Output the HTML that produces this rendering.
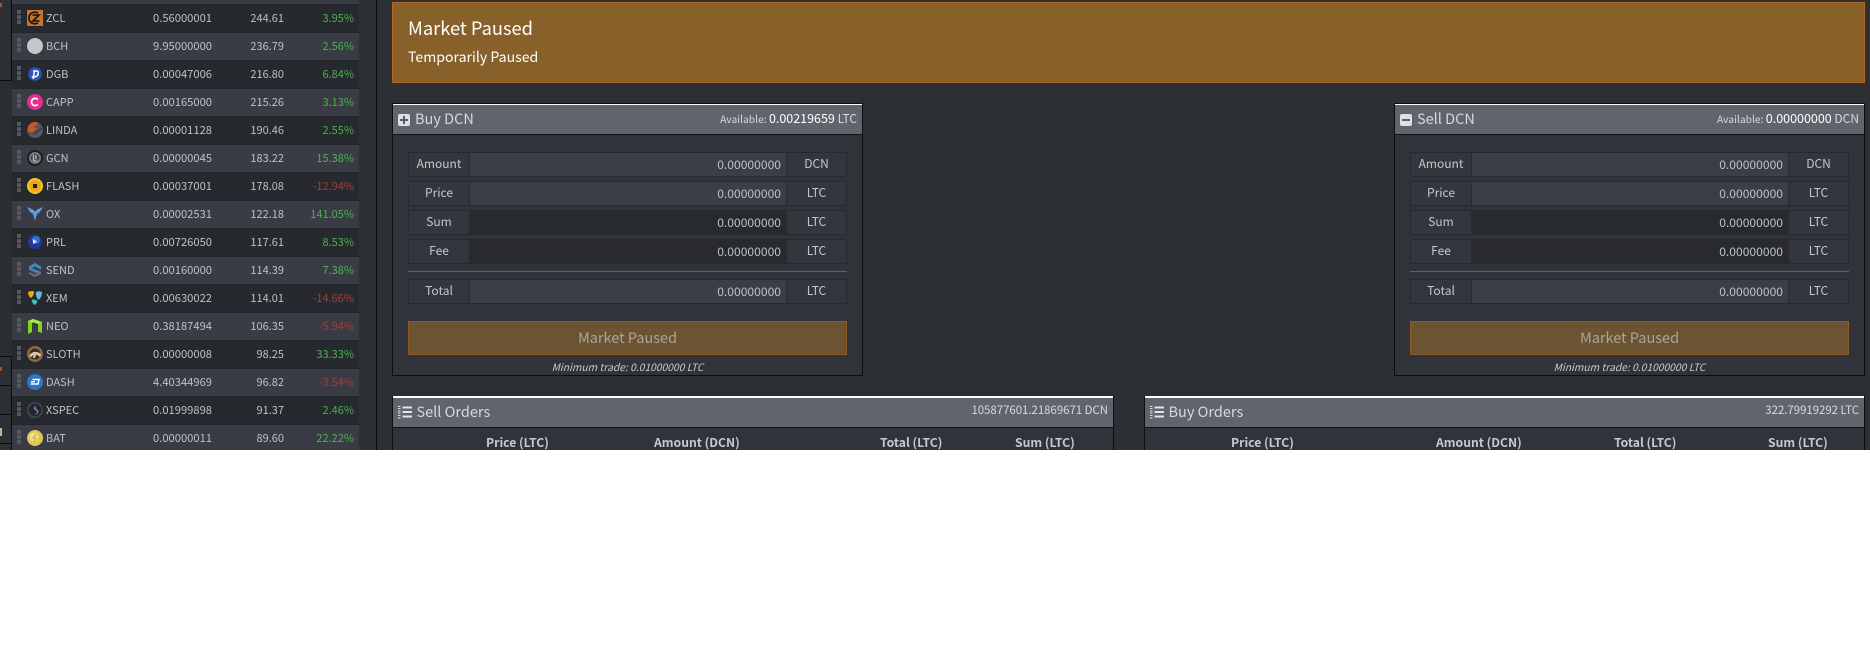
<!DOCTYPE html>
<html><head><meta charset="utf-8"><title>Market</title>
<style>
*{box-sizing:border-box;margin:0;padding:0}
html,body{width:1870px;height:648px;background:#fff;overflow:hidden}
body{font-family:"Noto Sans CJK JP","Liberation Sans",sans-serif;font-size:11px;color:#bcc2c9}
#app{position:absolute;left:0;top:0;width:1870px;height:450px;background:#2c2f34;overflow:hidden}
#app div,#app span,#app svg{position:absolute;white-space:nowrap}
.side{left:0;width:12px;background:#2c2f34;border-right:1px solid #0c0d0f}
.vl{left:376px;top:0;width:1px;height:450px;background:#0c0d0f}
.r{left:12px;width:347px;height:28px;background:#26292d;border-top:1px solid #212429;line-height:27px}
.r.a{background:#393c44}
.r .h{left:5px;width:4px;height:4px;background:#55585e}
.r .h1{top:5px}.r .h2{top:10px}.r .h3{top:15px}
.r svg{left:15px;top:5px;width:16px;height:16px}
.r .s{left:34px}
.r .p{left:141px;font-size:11.2px}
.r .v{right:75px}
.r .c{right:5px;color:#4cb34f}
.r .c.n{color:#a83c3c}
#ban{left:392px;top:2px;width:1473px;height:81px;background:#886029;border:1px solid #b5651d;color:#fff}
#ban .t{left:15px;top:12px;font-size:18.3px;line-height:26px}
#ban .u{left:15px;top:43px;font-size:14.1px;line-height:22px}
.pn{top:103px;width:471px;height:273px;background:#30333a;border:1px solid #0d0e10}
.hd{left:0;top:0;width:469px;height:31px;background:#61646c;border-top:1px solid #fff;border-bottom:1px solid #131416}
.ttl{left:22px;top:0;font-size:14.5px;line-height:28px;color:#d5d8dc}
.av{right:5px;top:0;font-size:12px;line-height:26px;color:#d8dade}
.av i{font-style:normal;font-size:10.3px}
.av b{font-weight:400;color:#fff;font-size:12.5px}
.ic{left:5px;top:9px;width:12px;height:12px;background:#dfe0e3;border-radius:2px}
.ic i{position:absolute;background:#5a5d65}
.f{left:15px;width:439px;height:25px;background:#33363c;border:1px solid #26292d}
.f .l{left:0;top:0;width:60px;height:23px;text-align:center;line-height:22px;color:#c4c8cd;font-size:12px}
.f .i{left:60px;top:0;width:318px;height:23px;background:#3b3e46;border-left:1px solid #26292d;border-right:1px solid #26292d;text-align:right;padding-right:5px;line-height:24px;color:#bcc2c9;font-size:12.1px}
.f .i.d{background:#292a2d;border-color:#292a2d}
.f .e{left:378px;top:0;width:59px;height:23px;text-align:center;line-height:22px;color:#c4c8cd;font-size:12px}
.hr{left:15px;top:167px;width:439px;height:1px;background:#5e6166}
.btn{left:15px;top:217px;width:439px;height:34px;background:#6c5432;border:1px solid #8e5a26;text-align:center;line-height:32px;font-size:14.5px;color:#aaa49b}
.mn{left:0;top:254px;width:469px;text-align:center;font-size:10.3px;font-style:italic;line-height:18px;color:#c8ccd1}
.od{top:396px;height:70px;background:#30333a;border-left:1px solid #0d0e10;border-right:1px solid #0d0e10}
.od .hd{top:0;height:32px;border-top:2px solid #fff;left:0}
.od .ttl{top:0;line-height:28px;left:23.5px}
.od .rt{right:5px;top:0;line-height:25px;font-size:11.4px;color:#d8dade}
.th{top:37px;line-height:18px;font-weight:700;font-size:12.2px;color:#c6cad0}
.lst{left:5px;top:7px;width:14px;height:14px}
</style></head><body>
<div id="app">
<div class="side" style="top:-1px;height:82px;border-bottom:1px solid #0c0d0f"></div>
<div style="left:0;top:3px;width:2px;height:4px;background:#a0552a"></div>
<div style="left:0;top:81px;width:12px;height:275px;background:#2a2d31"></div>
<div class="side" style="top:356px;height:30px;border-top:1px solid #0c0d0f"></div>
<div class="side" style="top:385px;height:29px;border-top:1px solid #0c0d0f"></div>
<div class="side" style="top:414px;height:29px;border-top:1px solid #0c0d0f"></div>
<div class="side" style="top:443px;height:10px;border-top:1px solid #0c0d0f"></div>
<div style="left:0;top:367px;width:2px;height:4px;background:#a0552a"></div>
<div style="left:0;top:428px;width:2px;height:8px;background:#c8b090"></div>

<div class="r a" style="top:-24px;border:0"></div>

<div class="r" style="top:4px"><div class="h h1"></div><div class="h h2"></div><div class="h h3"></div>
<svg viewBox="0 0 16 16"><rect width="16" height="16" fill="#c8722e"/><path d="M11 3.200A5.800 5.800 0 1 0 11 12.800" fill="none" stroke="#16130f" stroke-width="1.600"/><path d="M5.500 5h6.500L6 11h6.500" fill="none" stroke="#16130f" stroke-width="1.600"/></svg>
<span class="s">ZCL</span><span class="p">0.56000001</span><span class="v">244.61</span><span class="c">3.95%</span></div>

<div class="r a" style="top:32px"><div class="h h1"></div><div class="h h2"></div><div class="h h3"></div>
<svg viewBox="0 0 16 16"><circle cx="8" cy="8" r="8" fill="#c6c6c6"/></svg>
<span class="s">BCH</span><span class="p">9.95000000</span><span class="v">236.79</span><span class="c">2.56%</span></div>

<div class="r" style="top:60px"><div class="h h1"></div><div class="h h2"></div><div class="h h3"></div>
<svg viewBox="0 0 16 16"><circle cx="8" cy="8" r="6.8" fill="#2a56bb"/><path d="M6 5h3.2c2 0 2.4 1.4 1.9 3-.5 1.7-2 3-4.1 3H4.8M7.4 5 6.2 13" fill="none" stroke="#fff" stroke-width="1.5"/></svg>
<span class="s">DGB</span><span class="p">0.00047006</span><span class="v">216.80</span><span class="c">6.84%</span></div>

<div class="r a" style="top:88px"><div class="h h1"></div><div class="h h2"></div><div class="h h3"></div>
<svg viewBox="0 0 16 16"><circle cx="8" cy="8" r="8" fill="#e0308c"/><path d="M10.8 5.6A3.6 3.6 0 1 0 10.8 10.4" fill="none" stroke="#fff" stroke-width="1.7"/></svg>
<span class="s">CAPP</span><span class="p">0.00165000</span><span class="v">215.26</span><span class="c">3.13%</span></div>

<div class="r" style="top:116px"><div class="h h1"></div><div class="h h2"></div><div class="h h3"></div>
<svg viewBox="0 0 16 16"><circle cx="8" cy="8" r="8" fill="#55585c"/><path d="M1 7C1 3 4 0 8 0c2 0 3 .6 3 1.5L6 5l4 1-5 4H2.500C1.500 9.500 1 8.500 1 7z" fill="#d9531e"/><path d="M7 12l8-6" stroke="#26292d" stroke-width="1"/></svg>
<span class="s">LINDA</span><span class="p">0.00001128</span><span class="v">190.46</span><span class="c">2.55%</span></div>

<div class="r a" style="top:144px"><div class="h h1"></div><div class="h h2"></div><div class="h h3"></div>
<svg viewBox="0 0 16 16"><circle cx="8" cy="8" r="8" fill="#1f1f20"/><circle cx="8" cy="8" r="5.200" fill="#444" stroke="#8c8c8c" stroke-width="1.400"/><path d="M6.500 4.500v6.500h4M9 5v4.500" fill="none" stroke="#bbb" stroke-width="1.300"/></svg>
<span class="s">GCN</span><span class="p">0.00000045</span><span class="v">183.22</span><span class="c">15.38%</span></div>

<div class="r" style="top:172px"><div class="h h1"></div><div class="h h2"></div><div class="h h3"></div>
<svg viewBox="0 0 16 16"><circle cx="8" cy="8" r="8" fill="#f4c61f"/><circle cx="8" cy="8" r="5.800" fill="#e8a81c"/><rect x="6" y="6" width="4" height="4" fill="#22201a"/></svg>
<span class="s">FLASH</span><span class="p">0.00037001</span><span class="v">178.08</span><span class="c n">-12.94%</span></div>

<div class="r a" style="top:200px"><div class="h h1"></div><div class="h h2"></div><div class="h h3"></div>
<svg viewBox="0 0 16 16"><path d="M0 1l6 3 2 2 2-2 6-3-3 5-3 2-2 7-2-7-3-2z" fill="#5b9bdc"/><path d="M0 1l6 3 2 2 2-2 6-3-6 3.500-2 1-2-1z" fill="#cfe0f2"/></svg>
<span class="s">OX</span><span class="p">0.00002531</span><span class="v">122.18</span><span class="c">141.05%</span></div>

<div class="r" style="top:228px"><div class="h h1"></div><div class="h h2"></div><div class="h h3"></div>
<svg viewBox="0 0 16 16"><circle cx="8" cy="8" r="7" fill="#27359a"/><circle cx="9" cy="6" r="4" fill="#2b74d2"/><path d="M6 5l4 2.500-4 2.500z" fill="#d5e6f8"/></svg>
<span class="s">PRL</span><span class="p">0.00726050</span><span class="v">117.61</span><span class="c">8.53%</span></div>

<div class="r a" style="top:256px"><div class="h h1"></div><div class="h h2"></div><div class="h h3"></div>
<svg viewBox="0 0 16 16"><path d="M8 1l6 3.500v3L8 4.500 2 7.500V4.500z" fill="#3f8ac9"/><path d="M2 5l12 5v2l-6 3-6-3v-2l6 2.500 2-1L2 8z" fill="#6a6d74"/><path d="M2 5l12 5-2 1L2 7z" fill="#3f8ac9"/></svg>
<span class="s">SEND</span><span class="p">0.00160000</span><span class="v">114.39</span><span class="c">7.38%</span></div>

<div class="r" style="top:284px"><div class="h h1"></div><div class="h h2"></div><div class="h h3"></div>
<svg viewBox="0 0 16 16"><path d="M1 2c2-1 5-1 6-.5C7 4 6 7 3.500 8 2 6.500 1 4 1 2z" fill="#f5a623"/><path d="M9 2c2-1 4-1 6 0 0 3-1 6-3.500 8C9.500 8 8.500 5 9 2z" fill="#60b8e6"/><path d="M4.500 10c2-1 4.500-.500 6 1.500-1 2-2 3-3 3.500-1.500-1-2.500-3-3-5z" fill="#43c6b6"/></svg>
<span class="s">XEM</span><span class="p">0.00630022</span><span class="v">114.01</span><span class="c n">-14.66%</span></div>

<div class="r a" style="top:312px"><div class="h h1"></div><div class="h h2"></div><div class="h h3"></div>
<svg viewBox="0 0 16 16"><path d="M1 3l5-2 9 3v11l-4-1.500V6L6 4.200 5 5v9l-4 2z" fill="#7fd321"/><path d="M1 3l5-2 9 3-4 2-5-1.800L5 5z" fill="#a8e84a"/></svg>
<span class="s">NEO</span><span class="p">0.38187494</span><span class="v">106.35</span><span class="c n">-5.94%</span></div>

<div class="r" style="top:340px"><div class="h h1"></div><div class="h h2"></div><div class="h h3"></div>
<svg viewBox="0 0 16 16"><circle cx="8" cy="8" r="8" fill="#8c6a3c"/><circle cx="8" cy="8" r="5.500" fill="#3a3026"/><path d="M2 10c2-4 7-6 12-2l-1 3c-2-2-3-2.500-4-2l-1 3H6l.5-3L4 11z" fill="#d8c9ab"/></svg>
<span class="s">SLOTH</span><span class="p">0.00000008</span><span class="v">98.25</span><span class="c">33.33%</span></div>

<div class="r a" style="top:368px"><div class="h h1"></div><div class="h h2"></div><div class="h h3"></div>
<svg viewBox="0 0 16 16"><circle cx="8" cy="8" r="8" fill="#2f74c6"/><path d="M5.500 5.500H12l-1 4.500H3.800M4 7.800h4" fill="none" stroke="#fff" stroke-width="1.500"/></svg>
<span class="s">DASH</span><span class="p">4.40344969</span><span class="v">96.82</span><span class="c n">-3.54%</span></div>

<div class="r" style="top:396px"><div class="h h1"></div><div class="h h2"></div><div class="h h3"></div>
<svg viewBox="0 0 16 16"><circle cx="8" cy="8" r="7.200" fill="#23272e" stroke="#4b5361" stroke-width="1.200"/><path d="M10.500 3C6 5 6 7 9 8.500c2 1 1.500 3-2 4.500C12 12 12.500 9.500 10 7.500 8 6 8 4.500 10.500 3z" fill="#6b93c4"/></svg>
<span class="s">XSPEC</span><span class="p">0.01999898</span><span class="v">91.37</span><span class="c">2.46%</span></div>

<div class="r a" style="top:424px"><div class="h h1"></div><div class="h h2"></div><div class="h h3"></div>
<svg viewBox="0 0 16 16"><circle cx="8" cy="8" r="8" fill="#e0c658"/><circle cx="7" cy="7" r="4.500" fill="#f3e08a"/><path d="M9 4l-3 4h3l-2 4" stroke="#c9a93a" stroke-width="1" fill="none"/></svg>
<span class="s">BAT</span><span class="p">0.00000011</span><span class="v">89.60</span><span class="c">22.22%</span></div>

<div class="vl"></div>

<div id="ban"><div class="t">Market Paused</div><div class="u">Temporarily Paused</div></div>

<!-- BUY -->
<div class="pn" style="left:392px">
 <div class="hd"><div class="ic"><i style="left:2px;top:5px;width:8px;height:2px"></i><i style="left:5px;top:2px;width:2px;height:8px"></i></div>
 <div class="ttl">Buy DCN</div><div class="av"><i>Available: </i><b>0.00219659</b> LTC</div></div>
 <div class="f" style="top:48px"><div class="l">Amount</div><div class="i">0.00000000</div><div class="e">DCN</div></div>
 <div class="f" style="top:77px"><div class="l">Price</div><div class="i">0.00000000</div><div class="e">LTC</div></div>
 <div class="f" style="top:106px"><div class="l">Sum</div><div class="i d">0.00000000</div><div class="e">LTC</div></div>
 <div class="f" style="top:135px"><div class="l">Fee</div><div class="i d">0.00000000</div><div class="e">LTC</div></div>
 <div class="hr"></div>
 <div class="f" style="top:175px"><div class="l">Total</div><div class="i">0.00000000</div><div class="e">LTC</div></div>
 <div class="btn">Market Paused</div>
 <div class="mn">Minimum trade: 0.01000000 LTC</div>
</div>

<!-- SELL -->
<div class="pn" style="left:1394px">
 <div class="hd"><div class="ic"><i style="left:2px;top:5px;width:8px;height:2px"></i></div>
 <div class="ttl">Sell DCN</div><div class="av"><i>Available: </i><b>0.00000000</b> DCN</div></div>
 <div class="f" style="top:48px"><div class="l">Amount</div><div class="i">0.00000000</div><div class="e">DCN</div></div>
 <div class="f" style="top:77px"><div class="l">Price</div><div class="i">0.00000000</div><div class="e">LTC</div></div>
 <div class="f" style="top:106px"><div class="l">Sum</div><div class="i d">0.00000000</div><div class="e">LTC</div></div>
 <div class="f" style="top:135px"><div class="l">Fee</div><div class="i d">0.00000000</div><div class="e">LTC</div></div>
 <div class="hr"></div>
 <div class="f" style="top:175px"><div class="l">Total</div><div class="i">0.00000000</div><div class="e">LTC</div></div>
 <div class="btn">Market Paused</div>
 <div class="mn">Minimum trade: 0.01000000 LTC</div>
</div>

<!-- SELL ORDERS -->
<div class="od" style="left:392px;width:722px">
 <div class="hd" style="width:720px"><svg class="lst" viewBox="0 0 14 14"><path d="M4.500 2.500H14M4.500 7H14M4.500 11.500H14" stroke="#e2e3e6" stroke-width="2"/><path d="M0 1.500h2.500M0 3.500h2.500M0 6h2.500M0 8h2.500M0 10.500h2.500M0 13h2.500" stroke="#e2e3e6" stroke-width="1"/></svg>
 <div class="ttl">Sell Orders</div><div class="rt">105877601.21869671 DCN</div></div>
 <div class="th" style="left:93px">Price (LTC)</div>
 <div class="th" style="left:261px">Amount (DCN)</div>
 <div class="th" style="left:487px">Total (LTC)</div>
 <div class="th" style="left:622px">Sum (LTC)</div>
</div>

<!-- BUY ORDERS -->
<div class="od" style="left:1144px;width:721px">
 <div class="hd" style="width:719px"><svg class="lst" viewBox="0 0 14 14"><path d="M4.500 2.500H14M4.500 7H14M4.500 11.500H14" stroke="#e2e3e6" stroke-width="2"/><path d="M0 1.500h2.500M0 3.500h2.500M0 6h2.500M0 8h2.500M0 10.500h2.500M0 13h2.500" stroke="#e2e3e6" stroke-width="1"/></svg>
 <div class="ttl">Buy Orders</div><div class="rt">322.79919292 LTC</div></div>
 <div class="th" style="left:86px">Price (LTC)</div>
 <div class="th" style="left:291px">Amount (DCN)</div>
 <div class="th" style="left:469px">Total (LTC)</div>
 <div class="th" style="left:623px">Sum (LTC)</div>
</div>
</div>
</body></html>
